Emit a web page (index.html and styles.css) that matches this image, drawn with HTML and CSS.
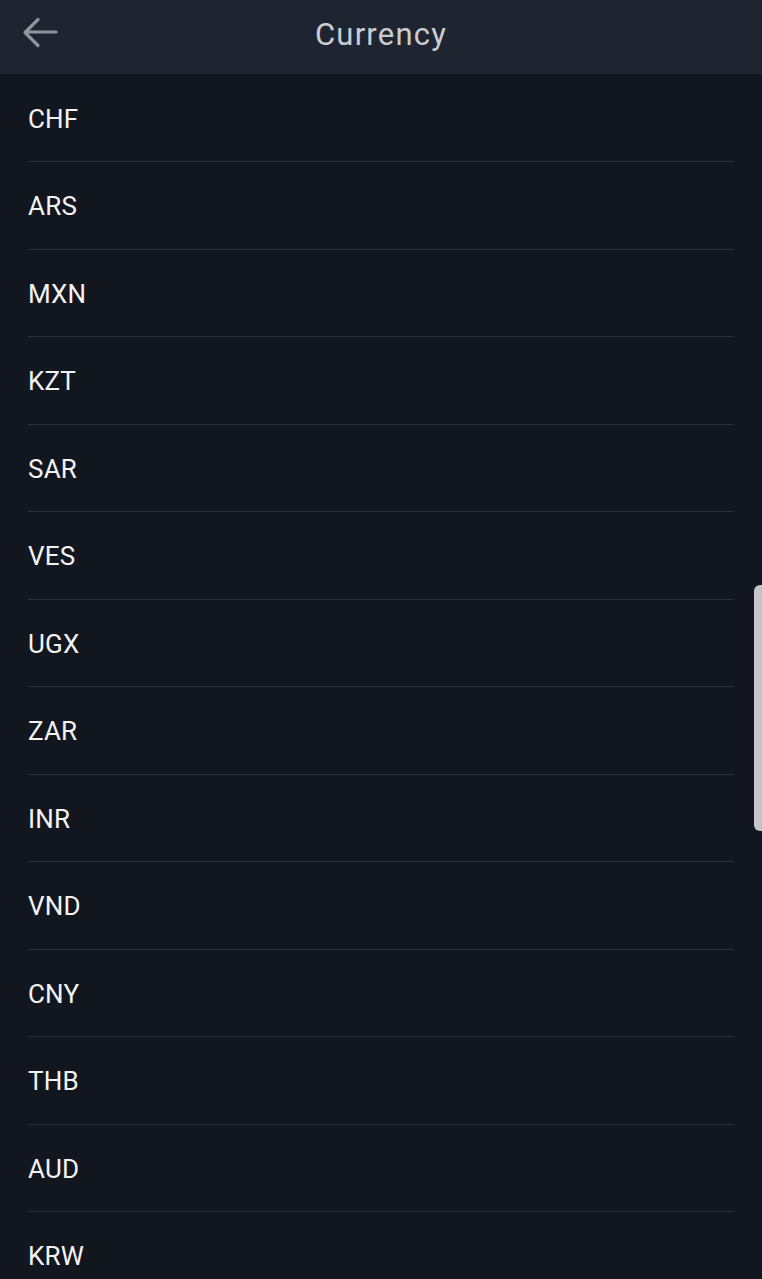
FILE: index.html
```html
<!DOCTYPE html>
<html>
<head>
<meta charset="utf-8">
<link rel="stylesheet" href="styles.css">
</head>
<body>
<div class="app">
  <header class="topbar">
    <svg class="back" width="40" height="36" viewBox="0 0 40 36">
      <path d="M36 16H6M18 3.5L5 16.5L18 29.5" fill="none" stroke="#8f959d" stroke-width="3.2" stroke-linecap="round" stroke-linejoin="round"/>
    </svg>
    <h1 class="title">Currency</h1>
  </header>
  <ul class="list">
    <li class="item">CHF</li>
    <li class="item">ARS</li>
    <li class="item">MXN</li>
    <li class="item">KZT</li>
    <li class="item">SAR</li>
    <li class="item">VES</li>
    <li class="item">UGX</li>
    <li class="item">ZAR</li>
    <li class="item">INR</li>
    <li class="item">VND</li>
    <li class="item">CNY</li>
    <li class="item">THB</li>
    <li class="item">AUD</li>
    <li class="item">KRW</li>
  </ul>
  <div class="scrollthumb"></div>
</div>
</body>
</html>
```
FILE: styles.css
```css
html, body {
  margin: 0;
  padding: 0;
  background: #12161e;
  height: 100%;
  overflow: hidden;
}
.app {
  position: relative;
  width: 762px;
  height: 1279px;
  background: #12161e;
  font-family: Roboto, "Liberation Sans", sans-serif;
  overflow: hidden;
}
.topbar {
  height: 74px;
  background: #1f2530;
  display: flex;
  align-items: center;
  justify-content: center;
  position: relative;
}
.back {
  position: absolute;
  left: 20px;
  top: 16px;
}
.title {
  margin: 0;
  font-weight: 400;
  font-size: 31px;
  letter-spacing: 1.2px;
  color: #c9cdd3;
  padding-bottom: 5px;
}
.list {
  list-style: none;
  margin: 0;
  padding: 0 28px;
}
.item {
  height: 87.5px;
  box-sizing: border-box;
  display: flex;
  align-items: center;
  color: #f2f3f5;
  font-size: 26px;
  letter-spacing: 0.2px;
  border-bottom: 1px solid #2a2f39;
  padding-top: 2px;
}
.item:first-child {
  height: 88px;
}
.scrollthumb {
  position: absolute;
  right: 0;
  top: 585px;
  width: 8px;
  height: 246px;
  background: #c3c5c9;
  border-radius: 6px 0 0 6px;
}
```
